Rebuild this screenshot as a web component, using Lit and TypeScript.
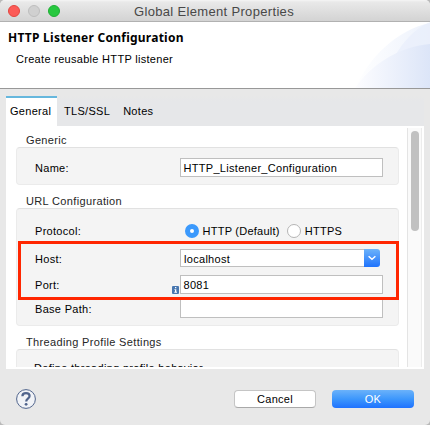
import { LitElement, html, css } from "lit";
import { customElement, property } from "lit/decorators.js";
import { classMap } from "lit/directives/class-map.js";

@customElement("group-box")
class GroupBox extends LitElement {
  @property() label = "";
  static styles = css`
    :host { display: block; }
    .label { box-sizing: border-box; height: 15px; line-height: 15px; padding: 1px 0 0 10px; color: #262626; letter-spacing: 0.35px; }
    .body {
      box-sizing: border-box; border: 1px solid #ebebeb; border-top: 1px solid #e1e1e1;
      border-radius: 4px; background: #f4f4f4; height: var(--body-height);
      padding: var(--body-padding, 0);
    }
  `;
  render() {
    return html`<div class="label">${this.label}</div><div class="body"><slot></slot></div>`;
  }
}

@customElement("app-root")
class AppRoot extends LitElement {
  static styles = css`
    :host {
      display: block; width: 430px; height: 425px; background: #b9b9b9; color: #000;
      font: 11px/15px "Liberation Sans", Arial, sans-serif; letter-spacing: 0.3px;
    }
    .window {
      box-sizing: border-box; height: 425px; display: flex; flex-direction: column;
      background: #e8e8e8; border-radius: 5px; overflow: hidden;
    }
    .titlebar {
      box-sizing: border-box; flex: none; height: 22px; display: grid;
      grid-template-columns: 134px 1fr; align-items: center;
      background: linear-gradient(#f5f5f5, #e9e9e9 2px, #d3d3d3); border-bottom: 1px solid #b1b1b1;
    }
    .lights { display: flex; gap: 8px; padding-left: 8px; }
    .light { box-sizing: border-box; width: 12px; height: 12px; border-radius: 50%; border: 1px solid #e2463f; background: #fc5b57; }
    .light.off { background: #d0d0d0; border-color: #bdbdbd; }
    .light.zoom { background: #27c83f; border-color: #1fae34; }
    .title { font-size: 13px; line-height: 18px; color: #484848; padding-top: 3px; letter-spacing: 0.33px; white-space: nowrap; }
    .banner {
      box-sizing: border-box; flex: none; height: 67px; display: flex; justify-content: space-between;
      background: #fff; border-bottom: 1px solid #989898;
    }
    .heading {
      margin: 7px 0 0 8px; white-space: nowrap;
      font: bold 12px/18px "Noto Sans", "Open Sans", sans-serif; letter-spacing: 0.25px;
    }
    .sub { margin: 5px 0 0 16px; line-height: 15px; }
    .tabs {
      flex: none; height: 30px; margin: 7px 6px 0; display: flex;
      background: linear-gradient(#e8e8e8, #e6e7e9 5px); line-height: 30px;
    }
    .tab { margin-left: 13px; }
    .tab.on { box-sizing: border-box; margin: 0 -6px 0 0; width: 51px; padding-left: 4px; border-top: 2px solid #66b7dd; background: #fff; line-height: 26px; }
    .pane {
      box-sizing: border-box; flex: none; height: 243px; margin: 0 6px; padding: 2px 2px 2px 10px;
      background: #fff; display: flex; justify-content: space-between;
    }
    .groups { position: relative; width: 383px; height: 239px; overflow: hidden; }
    .generic { margin-top: 4px; --body-height: 38px; --body-padding: 10px 0 0 18px; }
    .url { margin-top: 8px; --body-height: 118px; --body-padding: 13px 0 0 18px; }
    .threading { margin-top: 8px; --body-height: 60px; --body-padding: 11px 0 0 17px; }
    .row { display: grid; grid-template-columns: 145px 203px; align-items: start; height: 19px; }
    .row > span { line-height: 15px; padding-top: 3px; }
    .field {
      box-sizing: border-box; height: 19px; line-height: 19px; padding-left: 2.5px;
      border: 1px solid #bfbfbf; background: #fff; white-space: nowrap;
    }
    .row.protocol > span { padding-top: 2px; }
    .radios { display: flex; align-items: center; padding: 2px 0 0 4.5px; height: 14px; white-space: nowrap; letter-spacing: 0.25px; }
    .radio { box-sizing: border-box; width: 14px; height: 14px; border-radius: 50%; border: 1px solid #b5b5b5; background: #fff; margin-right: 4px; }
    .radio.on { border: 5px solid #3b99fc; }
    .choice { margin-right: 7px; }
    .host { margin-top: 8px; }
    .port { margin-top: 7px; }
    .path { margin-top: 5px; }
    .combo { height: 18px; display: flex; width: 200px; }
    .combo .field { height: 18px; line-height: 19px; flex: 1; border-right: 0; padding-left: 3px; }
    .drop { width: 16px; height: 18px; border-radius: 0 3px 3px 0; background: linear-gradient(#6cb3fa, #1f73fd); }
    .drop svg, .info, .help, .arc { display: block; }
    .portfield { display: grid; grid-template-columns: 8px 203px; margin-left: -8px; align-items: end; }
    .mark {
      position: absolute; left: 2px; top: 113px; width: 381px; height: 59px;
      box-sizing: border-box; border: 3px solid #ff2600;
    }
    .scroll {
      box-sizing: border-box; width: 15px; height: 239px; padding: 3px; background: #fafafa;
      border-left: 1px solid #e4e4e4; border-right: 1px solid #ececec;
    }
    .thumb { height: 100px; width: 8px; border-radius: 4px; background: #c1c1c1; }
    .footer { flex: 1; display: flex; align-items: center; padding: 5px 16px 1px; }
    .btn {
      box-sizing: border-box; width: 82px; height: 18px; line-height: 17px; text-align: center;
      border-radius: 4px; background: #fff; border: 1px solid #c5c5c5; border-bottom-color: #a9a9a9;
    }
    .cancel { margin-left: auto; margin-right: 16px; }
    .ok { color: #fff; border: 0; line-height: 19px; background: linear-gradient(#6bb2fa, #3d97fc 50%, #1f72ff); }
  `;

  private field(label: string, value: string, kind = "") {
    return html`<div class=${"row " + kind}><span>${label}</span><div class="field">${value}</div></div>`;
  }

  private tab(name: string, on = false) {
    return html`<div class=${classMap({ tab: true, on })}>${name}</div>`;
  }

  render() {
    return html`<div class="window">
      <div class="titlebar">
        <div class="lights"><i class="light"></i><i class="light off"></i><i class="light zoom"></i></div>
        <div class="title">Global Element Properties</div>
      </div>
      <div class="banner">
        <div><div class="heading">HTTP Listener Configuration</div><div class="sub">Create reusable HTTP listener</div></div>
        <svg class="arc" width="75" height="66" viewBox="0 0 75 66">
          <defs>
            <linearGradient id="a"><stop offset="0" stop-color="#fff"/><stop offset="1" stop-color="#edf2fc"/></linearGradient>
            <linearGradient id="b"><stop offset="0" stop-color="#fdfdff"/><stop offset="1" stop-color="#dce5f8"/></linearGradient>
          </defs>
          <path d="M0 66C14 36 41 8 75 1V66Z" fill="url(#a)"/>
          <path d="M40 34C48 20 59 7 75 0V34Z" fill="#e8eefb" opacity=".7"/>
          <path d="M0 66C15 44 42 25 75 22V66Z" fill="url(#b)"/>
        </svg>
      </div>
      <div class="tabs">${this.tab("General", true)}${this.tab("TLS/SSL")}${this.tab("Notes")}</div>
      <div class="pane">
        <div class="groups">
          <group-box class="generic" label="Generic">${this.field("Name:", "HTTP_Listener_Configuration")}</group-box>
          <group-box class="url" label="URL Configuration">
            <div class="row protocol"><span>Protocol:</span>
              <div class="radios"><i class="radio on"></i><span class="choice">HTTP (Default)</span><i class="radio"></i><span>HTTPS</span></div>
            </div>
            <div class="row host"><span>Host:</span>
              <div class="combo"><div class="field">localhost</div>
                <div class="drop"><svg width="16" height="18" viewBox="0 0 16 18"><path d="M4.6 7.3 8 10.3 11.4 7.3" fill="none" stroke="#fff" stroke-width="1.5"/></svg></div>
              </div>
            </div>
            <div class="row port"><span>Port:</span>
              <div class="portfield">
                <svg class="info" width="7" height="8" viewBox="0 0 7 8"><rect width="7" height="8" rx="1" fill="#4877b0"/><path d="M3 1h1.3v1.2H3zM2.4 3.2h1.9v2.6h.7v.9H2.3v-.9H3V4.1h-.6z" fill="#fff"/></svg>
                <div class="field">8081</div>
              </div>
            </div>
            ${this.field("Base Path:", "", "path")}
          </group-box>
          <group-box class="threading" label="Threading Profile Settings">Define threading profile behavior</group-box>
          <div class="mark"></div>
        </div>
        <div class="scroll"><div class="thumb"></div></div>
      </div>
      <div class="footer">
        <svg class="help" width="20" height="20" viewBox="0 0 20 20">
          <circle cx="10" cy="10" r="9.4" fill="#f1f3f7" stroke="#50648c" stroke-width="1"/>
          <path d="M6.4 7.2C6.4 4.9 8 4.1 10 4.1c2.2 0 3.6 1.1 3.6 2.9 0 2.7-3.4 2.6-3.4 5.4" fill="none" stroke="#50648c" stroke-width="2.2"/>
          <circle cx="10.1" cy="15.3" r="1.4" fill="#50648c"/>
        </svg>
        <div class="btn cancel">Cancel</div><div class="btn ok">OK</div>
      </div>
    </div>`;
  }
}
